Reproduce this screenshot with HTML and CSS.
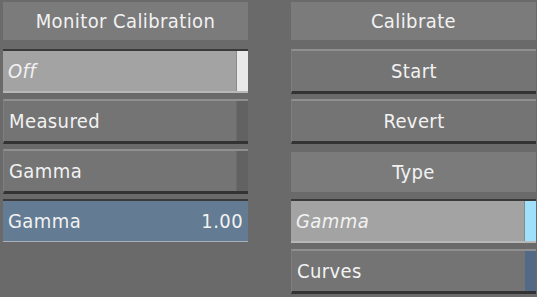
FILE: index.html
```html
<!DOCTYPE html>
<html lang="en">
<head>
    <meta charset="UTF-8">
    <meta name="viewport" content="width=device-width, initial-scale=1.0">
    <link rel="stylesheet" href="styles.css">
    <title>Monitor Calibration</title>
</head>
<body>
<div class="panel">
    <div class="column">
        <div class="slot slot_first">
            <div class="label">Monitor Calibration</div>
        </div>
        <div class="slot">
            <div class="field field_off">
                <span class="text text_italic">Off</span>
                <span class="strip strip_light"></span>
            </div>
        </div>
        <div class="slot">
            <div class="button">
                <span class="text">Measured</span>
                <span class="strip strip_dark"></span>
            </div>
        </div>
        <div class="slot">
            <div class="button">
                <span class="text">Gamma</span>
                <span class="strip strip_dark"></span>
            </div>
        </div>
        <div class="slot">
            <div class="field field_blue">
                <span class="text">Gamma</span>
                <span class="value">1.00</span>
            </div>
        </div>
    </div>

    <div class="column">
        <div class="slot slot_first">
            <div class="label">Calibrate</div>
        </div>
        <div class="slot">
            <div class="button button_center">
                <span class="text">Start</span>
            </div>
        </div>
        <div class="slot">
            <div class="button button_center">
                <span class="text">Revert</span>
            </div>
        </div>
        <div class="slot">
            <div class="label label_mid">Type</div>
        </div>
        <div class="slot">
            <div class="field field_off">
                <span class="text text_italic">Gamma</span>
                <span class="strip strip_cyan"></span>
            </div>
        </div>
        <div class="slot">
            <div class="button">
                <span class="text">Curves</span>
                <span class="strip strip_blue"></span>
            </div>
        </div>
    </div>
</div>
</body>
</html>
```

FILE: styles.css
```css
body, html {
    margin: 0;
    padding: 0;
    height: 100%;
    background-color: #6a6a6a;
}

.panel {
    display: flex;
    gap: 43px;
    padding-left: 3px;
    font-family: "DejaVu Sans", sans-serif;
    font-stretch: condensed;
    font-size: 20px;
    color: #f2f2f2;
}

.column {
    display: flex;
    flex-direction: column;
    width: 245px;
}

.slot {
    height: 50px;
    box-sizing: border-box;
}

.slot_first {
    height: 49px;
    padding-top: 2px;
}

.label {
    height: 38px;
    background-color: #7b7b7b;
    display: flex;
    align-items: center;
    justify-content: center;
    letter-spacing: 0.4px;
}

.label_mid {
    margin-top: 3px;
    height: 40px;
}

.field,
.button {
    position: relative;
    display: flex;
    align-items: center;
    box-sizing: border-box;
    padding: 0 5px;
    letter-spacing: 0.4px;
}

.field {
    height: 44px;
    border-top: 2px solid #3a3a3a;
    border-bottom: 2px solid #b8b8b8;
}

.field_off {
    background-color: #a3a3a3;
}

.field_blue {
    height: 43px;
    justify-content: space-between;
    background-color: #637b93;
    border-bottom: 1px solid #a9b0b8;
    padding-right: 5px;
}

.button {
    height: 45px;
    background-color: #747474;
    border-top: 2px solid #8f8f8f;
    border-left: 1px solid #7e7e7e;
    border-bottom: 3px solid #333333;
}

.button_center {
    justify-content: center;
}

.text_italic {
    font-style: italic;
}

/* right side indicator */
.strip {
    position: absolute;
    top: 0;
    right: 0;
    bottom: 0;
    width: 11px;
}

.strip_light {
    background-color: #e9e9e9;
    border-left: 1px solid #8a8a8a;
}

.strip_dark {
    background-color: #626262;
    border-left: 1px solid #6a6a6a;
}

.strip_cyan {
    background-color: #9fe1fb;
    border-left: 1px solid #8a8a8a;
}

.strip_blue {
    background-color: #536a86;
}
```
